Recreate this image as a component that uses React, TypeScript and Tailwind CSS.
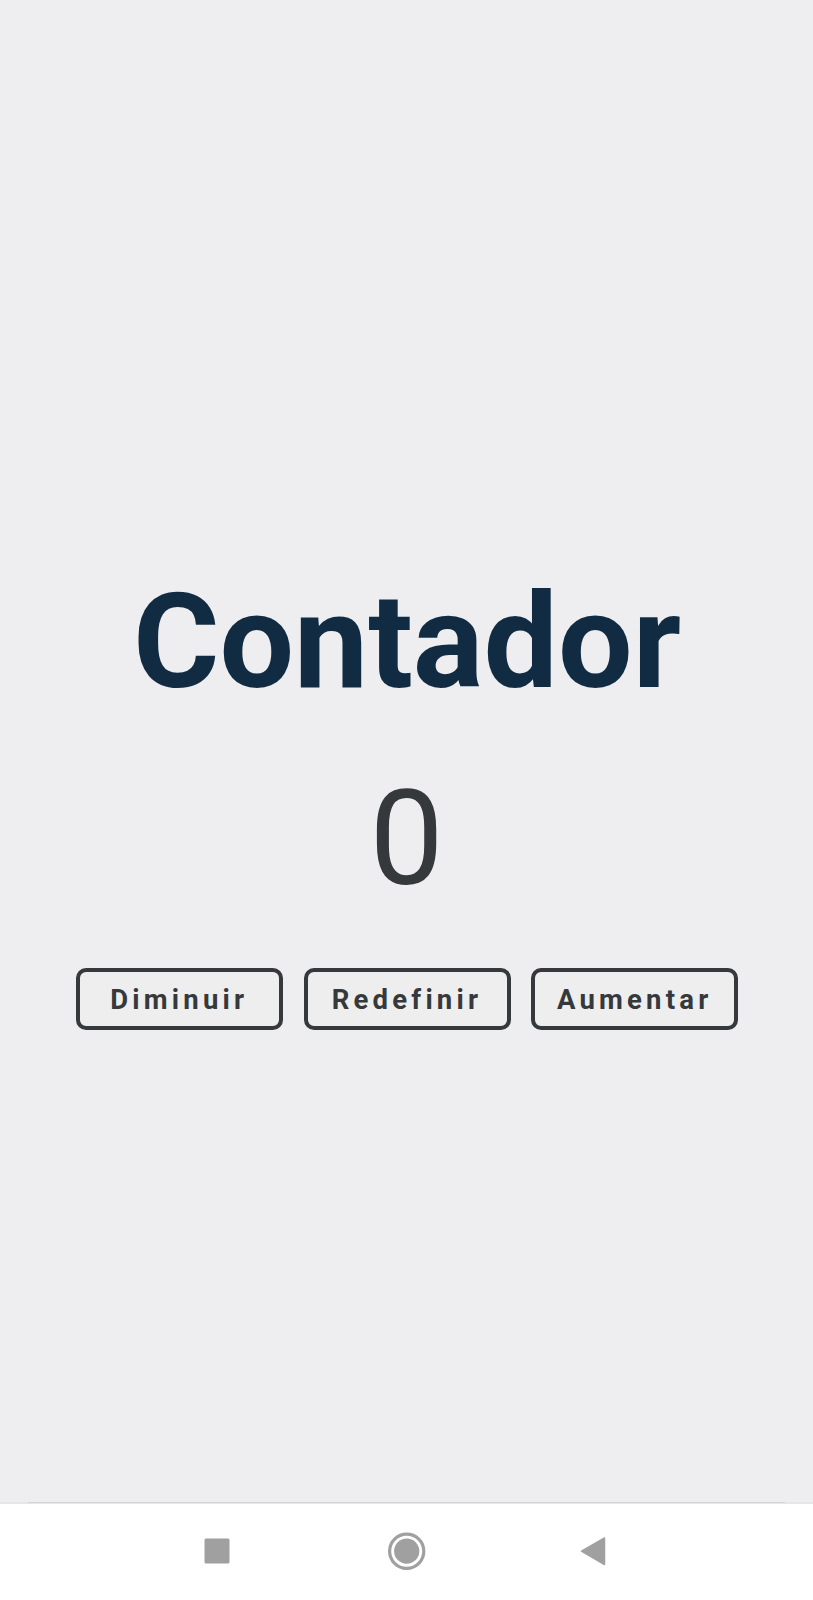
import React, { useState } from "react";

const buttonClass =
  "flex h-[62px] w-[207px] items-center justify-center rounded-[10px] border-4 border-[#36393c] bg-[#eeeeee] pt-px text-[27.5px] font-bold tracking-[4.2px] text-[#36393c]";

export default function App() {
  const [count, setCount] = useState(0);
  return (
    <div className="flex h-[1600px] w-[813px] flex-col bg-[#eeeef0] font-['Roboto',sans-serif]">
      <main className="flex h-[1502px] flex-col items-center pt-[564px]">
        <h1 className="pl-px text-[132.2px] leading-[156px] font-bold text-[#112b42]">Contador</h1>
        <p className="mt-[41px] text-[132px] leading-[156px] text-[#36393c]">{count}</p>
        <div className="mt-[51px] flex gap-[20.7px] pl-px">
          <button className={buttonClass} onClick={() => setCount(count - 1)}>Diminuir</button>
          <button className={buttonClass} onClick={() => setCount(0)}>Redefinir</button>
          <button className={buttonClass} onClick={() => setCount(count + 1)}>Aumentar</button>
        </div>
      </main>
      <div className="flex h-[2px] bg-[#e6e6e8] px-7">
        <div className="h-px flex-1 bg-[#d3d3d5]" />
      </div>
      <nav className="flex-1 bg-white">
        <svg width="813" height="96" viewBox="0 1504 813 96" fill="#a0a0a0">
          <rect x="204.5" y="1538.5" width="25" height="25" rx="1.5" />
          <circle cx="406.7" cy="1551.2" r="12.6" />
          <circle cx="406.7" cy="1551.2" r="17.1" fill="none" stroke="#a0a0a0" strokeWidth="3.2" />
          <path d="M581.5 1551.2 L604.5 1538 V1564.5Z" stroke="#a0a0a0" strokeLinejoin="round" strokeWidth="1.5" />
        </svg>
      </nav>
    </div>
  );
}
